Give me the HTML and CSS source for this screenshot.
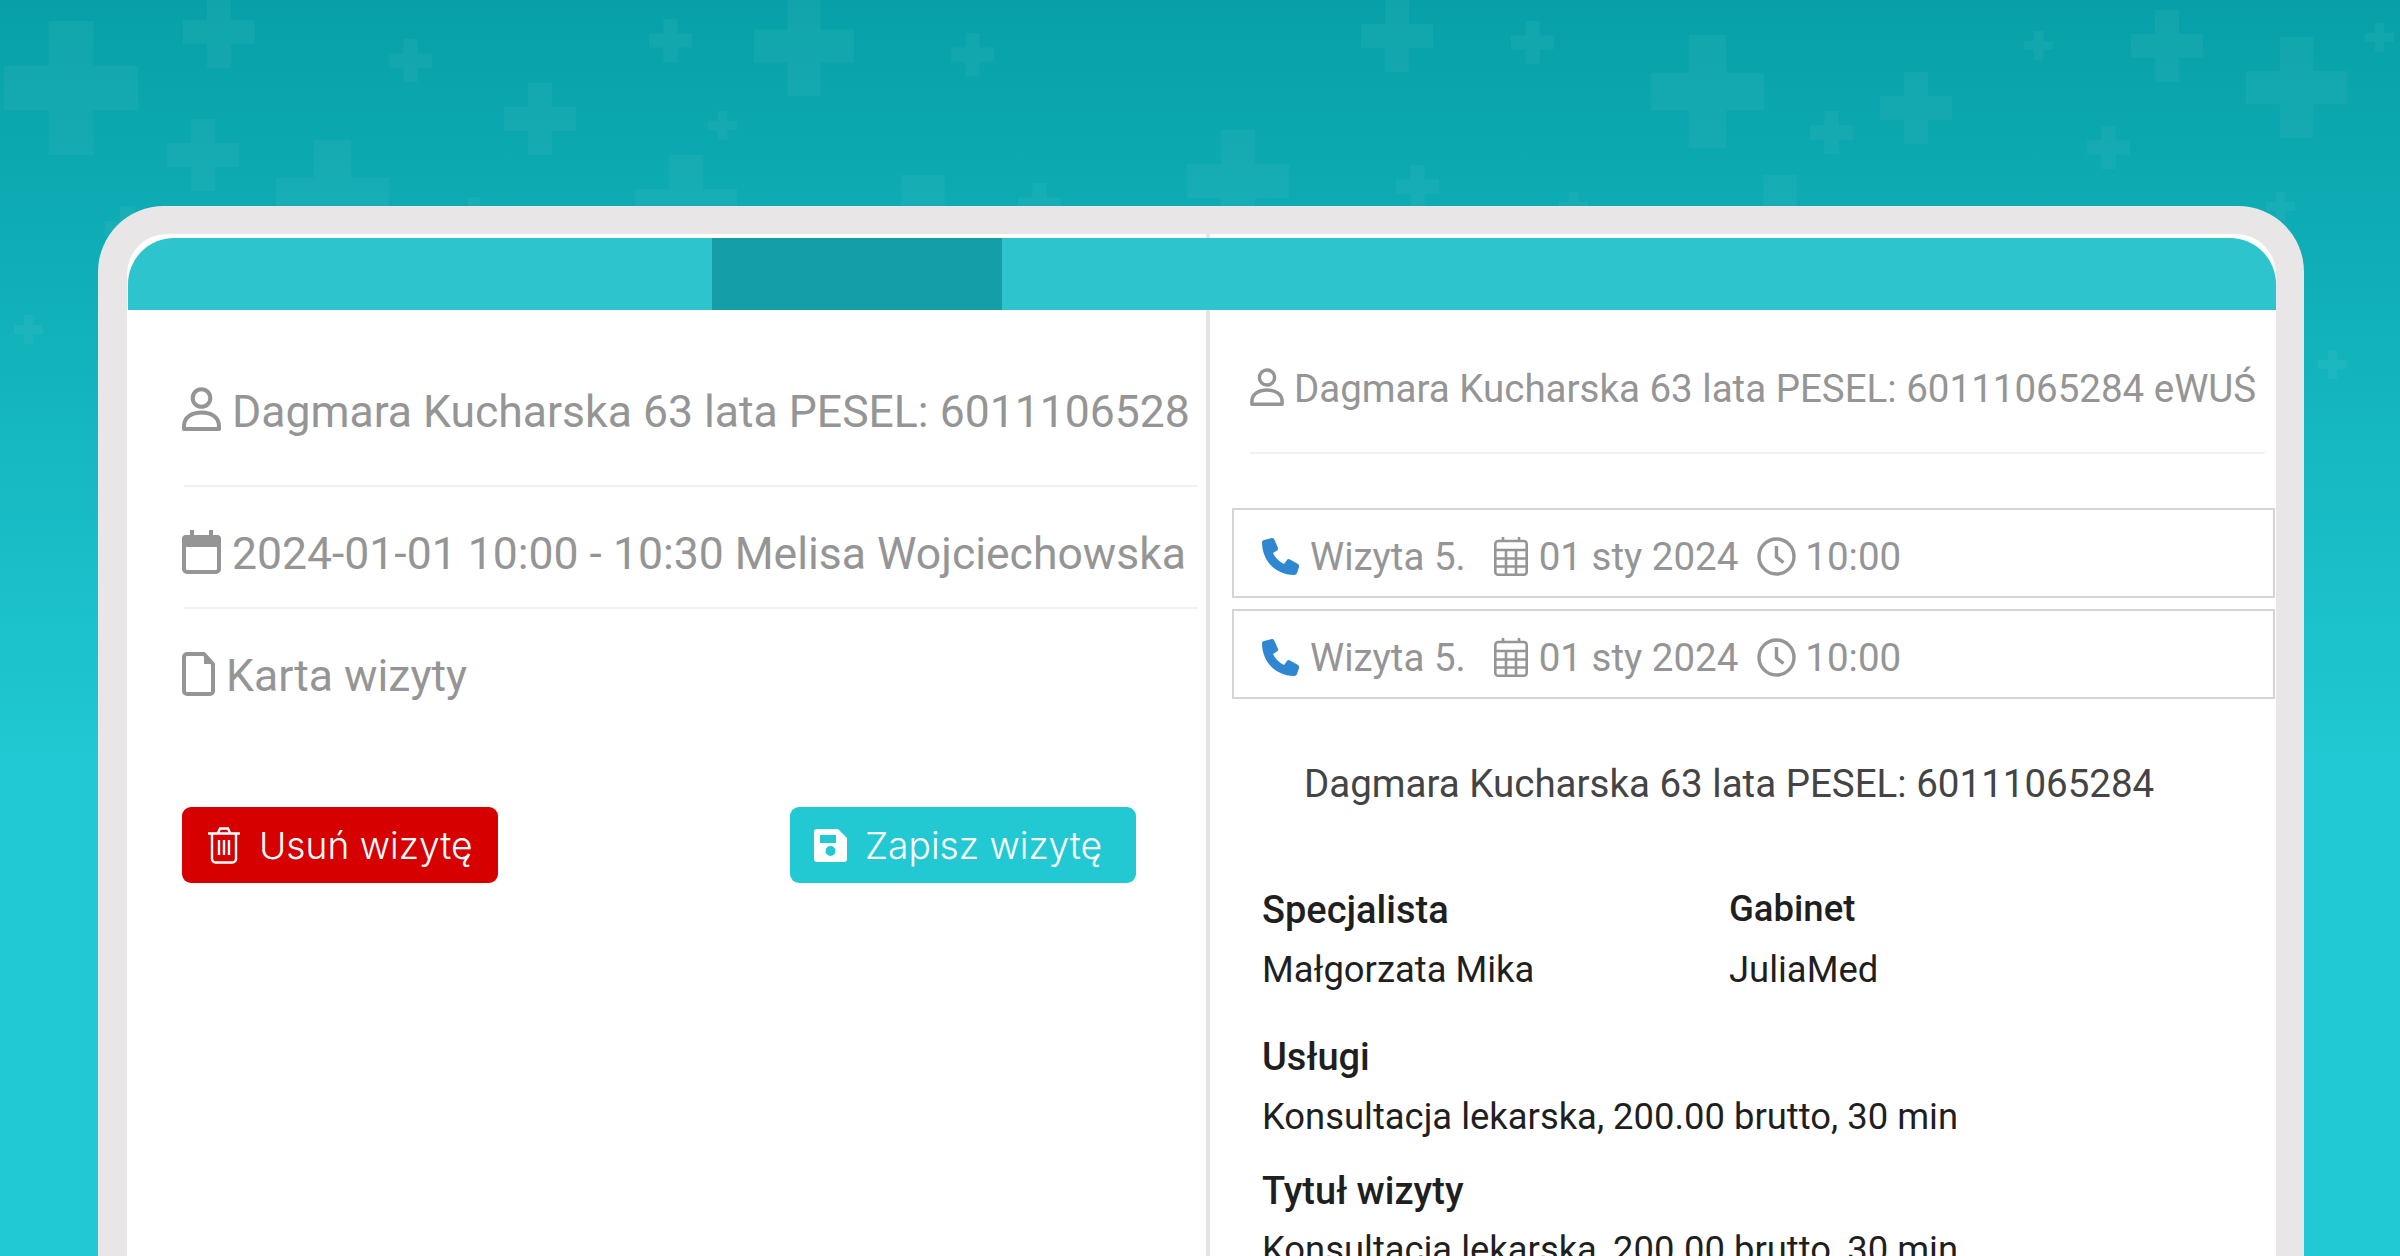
FILE: index.html
```html
<!DOCTYPE html>
<html lang="pl">

<head>
  <meta charset="UTF-8">
  <meta name="viewport" content="width=device-width, initial-scale=1.0">
  <title>Karta wizyty</title>
  <link rel="stylesheet" href="styles.css">
</head>

<body>
  <!-- crosses on the backdrop -->
  <svg class="bg-crosses" width="2400" height="420">
    <defs>
      <symbol id="plus" viewBox="0 0 3 3">
        <path d="M1 0h1v1h1v1H2v1H1V2H0V1h1z" />
      </symbol>
    </defs>
    <use href="#plus" x="4" y="21" width="134" height="134" />
    <use href="#plus" x="183" y="-4" width="72" height="72" />
    <use href="#plus" x="389" y="39" width="43" height="43" />
    <use href="#plus" x="649" y="19" width="43" height="43" />
    <use href="#plus" x="754" y="-4" width="100" height="100" />
    <use href="#plus" x="951" y="33" width="43" height="43" />
    <use href="#plus" x="504" y="83" width="72" height="72" />
    <use href="#plus" x="708" y="111" width="29" height="29" />
    <use href="#plus" x="167" y="119" width="72" height="72" />
    <use href="#plus" x="276" y="140" width="113" height="113" />
    <use href="#plus" x="635" y="155" width="102" height="102" />
    <use href="#plus" x="858" y="175" width="130" height="130" />
    <use href="#plus" x="1018" y="183" width="43" height="43" />
    <use href="#plus" x="456" y="197" width="36" height="36" />
    <use href="#plus" x="105" y="206" width="45" height="45" />
    <use href="#plus" x="14" y="315" width="29" height="29" />
    <use href="#plus" x="1187" y="130" width="102" height="102" />
    <use href="#plus" x="1361" y="0" width="72" height="72" />
    <use href="#plus" x="1511" y="21" width="43" height="43" />
    <use href="#plus" x="1651" y="35" width="113" height="113" />
    <use href="#plus" x="1880" y="72" width="72" height="72" />
    <use href="#plus" x="1810" y="111" width="43" height="43" />
    <use href="#plus" x="2024" y="31" width="29" height="29" />
    <use href="#plus" x="2131" y="10" width="72" height="72" />
    <use href="#plus" x="2246" y="37" width="101" height="101" />
    <use href="#plus" x="2087" y="126" width="43" height="43" />
    <use href="#plus" x="2365" y="23" width="29" height="29" />
    <use href="#plus" x="1396" y="165" width="43" height="43" />
    <use href="#plus" x="1559" y="192" width="29" height="29" />
    <use href="#plus" x="1730" y="175" width="100" height="100" />
    <use href="#plus" x="2266" y="192" width="29" height="29" />
    <use href="#plus" x="2318" y="350" width="29" height="29" />
  </svg>

  <div class="device">
    <div class="screen">
      <div class="top-bar">
        <div class="top-tab"></div>
      </div>

      <div class="panels">
        <!-- left panel -->
        <section class="panel-left">
          <div class="info-row row-patient">
            <svg class="icon-user" viewBox="0 0 39 44">
              <circle cx="19.5" cy="11" r="8.8" />
              <path d="M2 42v-3c0-9 8-13.500 17.500-13.500S37 30 37 39v3z" />
            </svg>
            <span>Dagmara Kucharska 63 lata PESEL: 6011106528</span>
          </div>
          <div class="info-row row-date">
            <svg class="icon-date" viewBox="0 0 39 44">
              <path class="fill" d="M8 0h4v5h15V0h4v5h4a4 4 0 0 1 4 4v8H0V9a4 4 0 0 1 4-4h4z" />
              <rect x="2" y="7" width="35" height="35" rx="3" />
            </svg>
            <span>2024-01-01 10:00 - 10:30 Melisa Wojciechowska</span>
          </div>
          <div class="info-row row-file">
            <svg class="icon-file" viewBox="0 0 33 44">
              <path d="M5 2h17l9 10v27a3 3 0 0 1-3 3H5a3 3 0 0 1-3-3V5a3 3 0 0 1 3-3z" />
              <path class="fill" d="M22 2v10h9z" />
            </svg>
            <span>Karta wizyty</span>
          </div>

          <div class="buttons">
            <button class="btn btn-delete">
              <svg class="icon-trash" viewBox="0 0 32 37">
                <path d="M0 6.500h32M10 6l2-4.500h8L22 6M4 7v25a3.500 3.500 0 0 0 3.500 3.500h17A3.500 3.500 0 0 0 28 32V7M11 13v15M16 13v15M21 13v15" />
              </svg>
              Usuń wizytę
            </button>
            <button class="btn btn-save">
              <svg class="icon-save" viewBox="0 0 33 33">
                <path fill-rule="evenodd" d="M3 0h21l9 9v21a3 3 0 0 1-3 3H3a3 3 0 0 1-3-3V3a3 3 0 0 1 3-3zM6 6v8h16V6zM16.500 17a5 5 0 1 0 0 10 5 5 0 0 0 0-10z" />
              </svg>
              Zapisz wizytę
            </button>
          </div>
        </section>

        <!-- right panel -->
        <section class="panel-right">
          <div class="patient-head">
            <svg class="icon-user small" viewBox="0 0 39 44">
              <circle cx="19.5" cy="11" r="8.8" />
              <path d="M2 42v-3c0-9 8-13.500 17.500-13.500S37 30 37 39v3z" />
            </svg>
            <span>Dagmara Kucharska 63 lata PESEL: 60111065284 eWUŚ</span>
          </div>

          <div class="visit-list">
            <div class="visit">
              <svg class="icon-phone" viewBox="0 0 39 39">
                <path d="M3 3L11 1Q12.500 .7 13.500 3L17 11Q17.500 12.500 16 13.500L12 16Q15 23 23 27L26 23Q27 21.500 29 22.500L37 27Q38.500 28 38 30L36 36Q35.500 38 33 38C15 38 1 24 1 5Q1 3.500 3 3z" />
              </svg>
              <span class="visit-name">Wizyta 5.</span>
              <svg class="icon-grid" viewBox="0 0 34 39">
                <path d="M9 0v5M25 0v5M1.500 13h31M1.500 21.500h31M1.500 29.500h31M12 13v24M22 13v24" />
                <rect x="1.300" y="4" width="31.400" height="33.700" rx="3" />
              </svg>
              <span class="visit-date">01 sty 2024</span>
              <svg class="icon-clock" viewBox="0 0 39 39">
                <circle cx="19.500" cy="19.500" r="17.500" />
                <path d="M19.500 9v11l7 5.500" />
              </svg>
              <span>10:00</span>
            </div>
            <div class="visit">
              <svg class="icon-phone" viewBox="0 0 39 39">
                <path d="M3 3L11 1Q12.500 .7 13.500 3L17 11Q17.500 12.500 16 13.500L12 16Q15 23 23 27L26 23Q27 21.500 29 22.500L37 27Q38.500 28 38 30L36 36Q35.500 38 33 38C15 38 1 24 1 5Q1 3.500 3 3z" />
              </svg>
              <span class="visit-name">Wizyta 5.</span>
              <svg class="icon-grid" viewBox="0 0 34 39">
                <path d="M9 0v5M25 0v5M1.500 13h31M1.500 21.500h31M1.500 29.500h31M12 13v24M22 13v24" />
                <rect x="1.300" y="4" width="31.400" height="33.700" rx="3" />
              </svg>
              <span class="visit-date">01 sty 2024</span>
              <svg class="icon-clock" viewBox="0 0 39 39">
                <circle cx="19.500" cy="19.500" r="17.500" />
                <path d="M19.500 9v11l7 5.500" />
              </svg>
              <span>10:00</span>
            </div>
          </div>

          <p class="patient-line">Dagmara Kucharska 63 lata PESEL: 60111065284</p>

          <div class="details">
            <div class="detail-cols">
              <div>
                <h4>Specjalista</h4>
                <p>Małgorzata Mika</p>
              </div>
              <div>
                <h4 class="head-small">Gabinet</h4>
                <p>JuliaMed</p>
              </div>
            </div>
            <div class="detail-services">
              <h4>Usługi</h4>
              <p>Konsultacja lekarska, 200.00 brutto, 30 min</p>
            </div>
            <div class="detail-title">
              <h4>Tytuł wizyty</h4>
              <p>Konsultacja lekarska, 200.00 brutto, 30 min</p>
            </div>
          </div>
        </section>
      </div>
    </div>
  </div>
</body>

</html>
```
FILE: styles.css
```css
html,
body {
  height: 100%;
  margin: 0;
}

body {
  box-sizing: border-box;
  height: 1256px;
  padding: 206px 96px 0 98px;
  overflow: hidden;
  position: relative;
  background: linear-gradient(180deg, #07a0a8 0, #20c9d3 770px);
  font-family: Roboto, "Liberation Sans", sans-serif;
}

.bg-crosses {
  position: absolute;
  top: 0;
  left: 0;
  fill: #fff;
  fill-opacity: .045;
}

.device {
  position: relative;
  height: 100%;
  padding: 28px 28px 0 29px;
  box-sizing: border-box;
  background: #e8e6e7;
  border-radius: 66px 66px 0 0;
}

.screen {
  position: relative;
  height: 100%;
  padding-top: 4px;
  box-sizing: border-box;
  background: #fff;
  border-radius: 40px 40px 0 0;
  overflow: hidden;
}

/* vertical line between the panels, the bar covers it */
.screen::before {
  content: "";
  position: absolute;
  top: 0;
  bottom: 0;
  left: 1079px;
  width: 4px;
  background: #e4e4e4;
}

.top-bar {
  position: relative;
  height: 72px;
  margin-left: 1px;
  padding-left: 584px;
  background: #2ec4cd;
  border-radius: 46px 46px 0 0;
}

.top-tab {
  width: 290px;
  height: 100%;
  background: #149fa8;
}

.panels {
  display: grid;
  grid-template-columns: 1083px 1fr;
}

/* left panel */
.panel-left {
  padding: 0 12px 0 57px;
}

.info-row {
  display: flex;
  align-items: center;
  gap: 11px;
  height: 52px;
  font-size: 44.5px;
  line-height: 52px;
  color: #959595;
  white-space: nowrap;
}

.row-patient {
  padding: 76px 0 47px;
  border-bottom: 2px solid #f1f1f1;
}

.row-date {
  padding: 41px 0 27px;
  border-bottom: 2px solid #f1f1f1;
}

.row-file {
  padding-top: 41px;
}

.info-row svg {
  flex: none;
  margin: 0 0 4px -2px;
}

.row-patient svg {
  margin-bottom: 6px;
}

svg.icon-user,
svg.icon-date {
  width: 39px;
  height: 44px;
}

svg.icon-file {
  width: 33px;
  height: 44px;
}

.icon-user,
.icon-date,
.icon-file {
  fill: none;
  stroke: #959595;
  stroke-width: 4;
  stroke-linejoin: round;
}

.icon-date .fill,
.icon-file .fill {
  fill: #959595;
  stroke: none;
}

.buttons {
  display: flex;
  justify-content: space-between;
  width: 954px;
  margin: 105px 0 0 -2px;
}

.btn {
  display: flex;
  align-items: center;
  height: 76px;
  border: 0;
  border-radius: 9px;
  font-family: Inter, Roboto, sans-serif;
  font-size: 37.2px;
  font-weight: 300;
  color: #fff;
}

.btn-delete {
  width: 316px;
  padding: 0 0 0 26px;
  gap: 19px;
  background: #d60000;
}

.btn-save {
  width: 346px;
  padding: 0 0 0 24px;
  gap: 18px;
  background: #22c9d3;
}

svg.icon-trash {
  width: 32px;
  height: 37px;
  fill: none;
  stroke: #fff;
  stroke-width: 2.4;
}

svg.icon-save {
  width: 33px;
  height: 33px;
  fill: #fff;
}

/* right panel */
.panel-right {
  padding: 0 1px 0 22px;
  font-size: 38.5px;
}

.patient-head {
  display: flex;
  align-items: center;
  gap: 10px;
  height: 44px;
  margin-left: 18px;
  margin-right: 10px;
  padding: 56px 0 42px;
  border-bottom: 2px solid #f2f2f2;
  color: #959595;
  white-space: nowrap;
}

svg.icon-user.small {
  flex: none;
  width: 34px;
  height: 38px;
  margin-bottom: 3px;
}

.visit-list {
  display: flex;
  flex-direction: column;
  gap: 11px;
  margin-top: 54px;
}

.visit {
  display: flex;
  align-items: center;
  box-sizing: border-box;
  height: 90px;
  padding: 6px 0 0 27px;
  border: 2px solid #d5d5d5;
  color: #959595;
}

.visit svg {
  flex: none;
}

svg.icon-phone {
  width: 39px;
  height: 39px;
  fill: #2f86d1;
}

.visit-name {
  margin: 0 28px 0 10px;
}

svg.icon-grid {
  width: 34px;
  height: 39px;
  fill: none;
  stroke: #959595;
  stroke-width: 2.6;
}

.visit-date {
  margin: 0 19px 0 11px;
}

svg.icon-clock {
  width: 39px;
  height: 39px;
  margin-right: 9px;
  fill: none;
  stroke: #959595;
  stroke-width: 3.4;
}

.patient-line {
  margin: 63px 0 0 72px;
  color: #444;
  line-height: 44px;
}

.details {
  margin: 75px 0 0 30px;
  color: #1f1f1f;
  font-size: 36.4px;
}

.details h4 {
  margin: 0;
  font-size: 38px;
  font-weight: 500;
  line-height: 59px;
}

.details h4.head-small {
  margin-top: -2px;
  margin-bottom: 2px;
  font-size: 36.5px;
}

.details p {
  margin: 0;
  line-height: 59px;
}

.detail-cols {
  display: grid;
  grid-template-columns: 467px 1fr;
}

.detail-services {
  margin-top: 29px;
}

.detail-title {
  margin-top: 16px;
}

.detail-title p {
  margin-top: -1px;
}
```
